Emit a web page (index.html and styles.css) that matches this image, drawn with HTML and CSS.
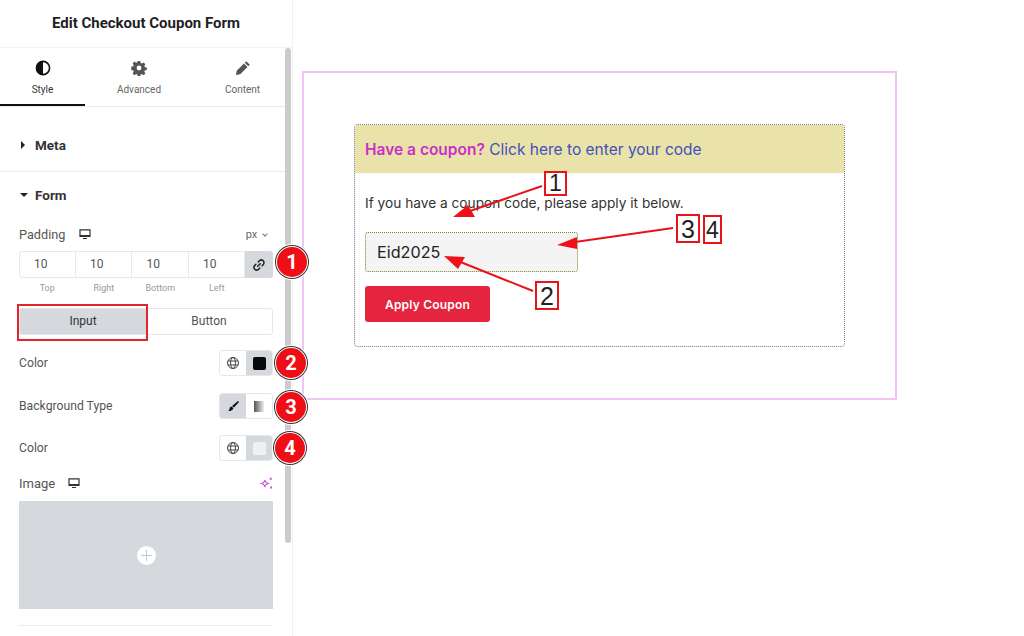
FILE: index.html
```html
<!DOCTYPE html>
<html lang="en">
<head>
    <meta charset="UTF-8">
    <title>Edit Checkout Coupon Form</title>
    <link rel="stylesheet" href="styles.css">
</head>
<body>
    <aside class="panel">
        <header class="panel-title">Edit Checkout Coupon Form</header>
        <nav class="tabs">
            <div class="tab tab-active">
                <svg class="tab-icon" viewBox="0 0 16 16"><circle cx="8" cy="8" r="6.6" fill="none" stroke="#111" stroke-width="1.6"/><path d="M8 1.4a6.6 6.6 0 0 0 0 13.2z" fill="#111"/></svg>
                <span>Style</span>
            </div>
            <div class="tab tab-mid">
                <svg class="tab-icon" viewBox="0 0 16 16"><path fill="#555" fill-rule="evenodd" d="M6.7 1h2.6l.4 2 1.2.5 1.7-1.100 1.800 1.800-1.100 1.700.5 1.200 2 .4v2.600l-2 .4-.5 1.200 1.100 1.700-1.800 1.800-1.700-1.100-1.200.5-.4 2H6.700l-.4-2-1.200-.5-1.700 1.100-1.800-1.800 1.100-1.700-.5-1.200-2-.4V6.700l2-.4.5-1.200-1.100-1.700 1.800-1.800 1.700 1.100 1.200-.5zM8 5.600a2.400 2.400 0 1 0 0 4.800 2.400 2.400 0 0 0 0-4.800z"/></svg>
                <span>Advanced</span>
            </div>
            <div class="tab tab-last">
                <svg class="tab-icon" viewBox="0 0 16 16"><path fill="#555" d="M11.300 1.200l3.500 3.500-1.500 1.500-3.500-3.500zM9 3.500L12.500 7l-7.300 7.300-4.200.7.700-4.200z"/></svg>
                <span>Content</span>
            </div>
        </nav>
        <section class="group group-meta">
            <span class="caret caret-right"></span>
            <h3>Meta</h3>
        </section>
        <section class="form-section">
            <div class="group-head">
                <span class="caret caret-down"></span>
                <h3>Form</h3>
            </div>
            <div class="label-row padding-label">
                <span>Padding</span>
                <svg class="device" viewBox="0 0 12 12"><path fill="none" stroke="#333" stroke-width="1.200" d="M1 1.800h10v6.700H1z"/><path fill="#333" d="M1 7h10v1.500H1zM4 10h4v1H4z"/></svg>
                <span class="unit">px <i class="chev"></i></span>
            </div>
            <div class="dims">
                <div class="dim"><div class="dim-box">10</div><small>Top</small></div>
                <div class="dim"><div class="dim-box">10</div><small>Right</small></div>
                <div class="dim"><div class="dim-box">10</div><small>Bottom</small></div>
                <div class="dim"><div class="dim-box">10</div><small>Left</small></div>
                <div class="link-btn">
                    <svg viewBox="0 0 14 14"><path fill="none" stroke="#222" stroke-width="1.500" stroke-linecap="round" d="M5.700 8.300l2.600-2.600M6.300 3.900l1.100-1.100a2.500 2.500 0 0 1 3.800 3.800l-1.100 1.100M7.700 10.100l-1.100 1.100a2.500 2.500 0 0 1-3.800-3.800l1.100-1.100"/></svg>
                </div>
            </div>
            <div class="switch">
                <div class="switch-item switch-on">Input</div>
                <div class="switch-item">Button</div>
            </div>
            <div class="ctl-row ctl-color">
                <span>Color</span>
                <div class="ctl">
                    <div class="ctl-cell">
                        <svg class="globe" viewBox="0 0 14 14"><g fill="none" stroke="#444" stroke-width="1"><circle cx="7" cy="7" r="5.500"/><ellipse cx="7" cy="7" rx="2.400" ry="5.500"/><path d="M2 5h10M2 9h10"/></g></svg>
                    </div>
                    <div class="ctl-cell cell-on"><span class="swatch swatch-black"></span></div>
                </div>
            </div>
            <div class="ctl-row ctl-bg">
                <span>Background Type</span>
                <div class="ctl">
                    <div class="ctl-cell cell-on">
                        <svg class="globe" viewBox="0 0 14 14"><path fill="#111" d="M12 2l1 1-5 5.600-2-1.700zM5.400 7.400l2 1.700c-.3 2.100-2.500 3.200-5.400 2.700 1.200-.7 1.400-1.300 1.600-2.300.2-1.100.8-1.900 1.800-2.100z"/></svg>
                    </div>
                    <div class="ctl-cell"><span class="gradient"></span></div>
                </div>
            </div>
            <div class="ctl-row ctl-color2">
                <span>Color</span>
                <div class="ctl">
                    <div class="ctl-cell">
                        <svg class="globe" viewBox="0 0 14 14"><g fill="none" stroke="#444" stroke-width="1"><circle cx="7" cy="7" r="5.500"/><ellipse cx="7" cy="7" rx="2.400" ry="5.500"/><path d="M2 5h10M2 9h10"/></g></svg>
                    </div>
                    <div class="ctl-cell cell-on"><span class="swatch swatch-light"></span></div>
                </div>
            </div>
            <div class="label-row image-label">
                <span>Image</span>
                <svg class="device" viewBox="0 0 12 12"><path fill="none" stroke="#333" stroke-width="1.200" d="M1 1.800h10v6.700H1z"/><path fill="#333" d="M1 7h10v1.500H1zM4 10h4v1H4z"/></svg>
                <svg class="sparkle" viewBox="0 0 12 12"><path fill="none" stroke="#c44fd8" stroke-width="1" d="M4.500 2.800c.4 2 1.100 2.700 3 3.200-1.900.5-2.600 1.200-3 3.200-.4-2-1.100-2.700-3-3.200 1.900-.5 2.600-1.200 3-3.200z"/><path fill="#c44fd8" d="M9 .8h1.800v1.800H9zM9.400 8.800h1.700v1.700H9.400z"/></svg>
            </div>
            <div class="image-box">
                <span class="plus"></span>
            </div>
            <hr class="rule">
        </section>
        <div class="scroll-thumb"></div>
    </aside>

    <main class="canvas">
        <div class="frame">
            <div class="coupon">
                <div class="coupon-head"><b>Have a coupon?</b> <a href="#">Click here to enter your code</a></div>
                <div class="coupon-body">
                    <p>If you have a coupon code, please apply it below.</p>
                    <div class="coupon-input">Eid2025</div>
                    <button class="coupon-btn">Apply Coupon</button>
                </div>
            </div>
        </div>
    </main>

    <!-- red annotations drawn on top of the screenshot -->
    <svg class="arrows" viewBox="0 0 1024 636">
        <g stroke="#e8141c" stroke-width="2" fill="#f0101a">
            <path d="M542 186L470 211"/>
            <path stroke="none" d="M453 217L468 205L475 217z"/>
            <path d="M673 228L575 242"/>
            <path stroke="none" d="M557 245L577 237L577 249z"/>
            <path d="M533 291L458 261"/>
            <path stroke="none" d="M444 256L465 257L458 269z"/>
        </g>
    </svg>
    <div class="num num-1">1</div>
    <div class="num num-2">2</div>
    <div class="num num-3">3</div>
    <div class="num num-4">4</div>
    <div class="red-box"></div>
    <div class="badge badge-1">1</div>
    <div class="badge badge-2">2</div>
    <div class="badge badge-3">3</div>
    <div class="badge badge-4">4</div>
</body>
</html>
```

FILE: styles.css
```css
html, body {
    height: 100%;
}
body {
    display: flex;
    margin: 0;
    overflow: hidden;
    background-color: #fff;
    color: #333;
    font-family: Roboto, "Liberation Sans", sans-serif;
    font-size: 12px;
}

/* left panel */
.panel {
    position: relative;
    flex: 0 0 293px;
    height: 636px;
    box-sizing: border-box;
    border-right: 1px solid #f1f1f3;
    overflow: hidden;
}
.panel-title {
    height: 47px;
    line-height: 47px;
    text-align: center;
    font-size: 15px;
    font-weight: 700;
    color: #1f1f1f;
    border-bottom: 1px solid #f4f4f5;
}
.tabs {
    display: flex;
    height: 58px;
    border-bottom: 1px solid #e9eaec;
}
.tab {
    flex: 0 0 85px;
    display: flex;
    flex-direction: column;
    align-items: center;
    padding-top: 12px;
    box-sizing: border-box;
    height: 58px;
    font-size: 10px;
    color: #666;
}
.tab-mid {
    flex-basis: 108px;
}
.tab-last {
    flex-basis: 99px;
}
.tab-active {
    color: #333;
    border-bottom: 2px solid #111;
}
.tab-icon {
    width: 16px;
    height: 16px;
    margin-bottom: 8px;
}
.group {
    display: flex;
    align-items: center;
    box-sizing: border-box;
    height: 65px;
    padding: 12px 0 0 21px;
    border-bottom: 1px solid #e9eaec;
}
.group h3, .group-head h3 {
    margin: 0 0 0 10px;
    font-size: 13.500px;
    font-weight: 700;
    color: #333;
}
.caret {
    width: 0;
    height: 0;
    border-style: solid;
}
.caret-right {
    border-width: 4px 0 4px 4px;
    border-color: transparent transparent transparent #222;
}
.caret-down {
    border-width: 4px 4.500px 0;
    border-color: #222 transparent transparent;
    margin-left: -1px;
}
.form-section {
    padding: 0 19px;
}
.group-head {
    display: flex;
    align-items: center;
    height: 16px;
    margin: 15px 0 0 2px;
}
.group-head h3 {
    margin-left: 7px;
}
.label-row {
    display: flex;
    align-items: center;
    height: 16px;
    font-size: 12.700px;
    color: #555;
}
.padding-label {
    margin-top: 23px;
}
.device {
    width: 12px;
    height: 12px;
    margin-left: 14px;
}
.unit {
    margin-left: auto;
    margin-right: 6px;
    font-size: 11px;
    color: #666;
}
.chev {
    display: inline-block;
    width: 3px;
    height: 3px;
    margin: 0 0 2px 3px;
    border-right: 1px solid #777;
    border-bottom: 1px solid #777;
    transform: rotate(45deg);
}
.dims {
    display: flex;
    margin-top: 9px;
}
.dim {
    flex: 0 0 56.500px;
    text-align: center;
}
.dim small {
    display: block;
    margin-top: 5px;
    font-size: 9px;
    color: #999;
}
.dim-box {
    box-sizing: border-box;
    height: 27px;
    line-height: 25px;
    padding-right: 13px;
    border: 1px solid #e6e8ea;
    border-left-width: 0;
    font-size: 12px;
    color: #555;
}
.dim:first-child .dim-box {
    border-left-width: 1px;
    border-radius: 3px 0 0 3px;
}
.link-btn {
    display: flex;
    align-items: center;
    justify-content: center;
    flex: 1;
    height: 27px;
    background-color: #d5d8dc;
    border-radius: 0 3px 3px 0;
}
.link-btn svg {
    width: 14px;
    height: 14px;
}
.switch {
    display: flex;
    height: 27px;
    margin-top: 15px;
    border: 1px solid #e6e8ea;
    border-radius: 3px;
    box-sizing: border-box;
}
.switch-item {
    flex: 1;
    line-height: 25px;
    text-align: center;
    color: #555;
}
.switch-on {
    background-color: #d5d8dc;
    color: #333;
}
.ctl-row {
    display: flex;
    align-items: center;
    justify-content: space-between;
    height: 26px;
    font-size: 12.200px;
    color: #555;
}
.ctl-color {
    margin-top: 15px;
}
.ctl-bg {
    margin-top: 17px;
}
.ctl-color2 {
    margin-top: 16px;
}
.ctl {
    display: flex;
    width: 54px;
    height: 26px;
    box-sizing: border-box;
    border: 1px solid #e6e8ea;
    border-radius: 3px;
    overflow: hidden;
}
.ctl-cell {
    flex: 1;
    display: flex;
    align-items: center;
    justify-content: center;
}
.cell-on {
    background-color: #d5d8dc;
}
.globe {
    width: 14px;
    height: 14px;
}
.swatch {
    width: 13px;
    height: 13px;
    border-radius: 2px;
}
.swatch-black {
    background-color: #0a0a0a;
}
.swatch-light {
    background-color: #eef0f2;
}
.gradient {
    width: 10px;
    height: 11px;
    background-image: linear-gradient(to right, #555, #eee);
}
.image-label {
    margin-top: 14px;
    font-size: 13px;
}
.image-label .device {
    margin-left: 13px;
}
.sparkle {
    width: 13px;
    height: 13px;
    margin-left: auto;
}
.image-box {
    display: flex;
    align-items: center;
    justify-content: center;
    height: 108px;
    margin-top: 10px;
    background-color: #d5d8dc;
}
.plus {
    position: relative;
    width: 19px;
    height: 19px;
    border-radius: 50%;
    background-color: #fff;
}
.plus::before, .plus::after {
    content: "";
    position: absolute;
    background-color: #c4c8cc;
}
.plus::before {
    left: 4px;
    right: 4px;
    top: 9px;
    height: 1px;
}
.plus::after {
    top: 4px;
    bottom: 4px;
    left: 9px;
    width: 1px;
}
.rule {
    margin: 16px 0 0;
    border: 0;
    border-top: 1px solid #e9eaec;
}
.scroll-thumb {
    position: absolute;
    top: 48px;
    right: 1px;
    width: 6px;
    height: 495px;
    border-radius: 3px;
    background-color: #cbcbcb;
}

/* canvas with the widget */
.canvas {
    flex: 1;
    padding: 71px 0 0 9px;
}
.frame {
    box-sizing: border-box;
    width: 595px;
    height: 329px;
    padding: 51px 50px 0;
    border: 2px solid #f0c4f5;
}
.coupon {
    box-sizing: border-box;
    width: 491px;
    height: 223px;
    border: 1px dotted #777;
    border-radius: 4px;
    overflow: hidden;
    font-family: Inter, "Liberation Sans", sans-serif;
}
.coupon-head {
    height: 48px;
    padding-left: 10px;
    line-height: 50px;
    font-size: 15.500px;
    background-color: #e9e3a9;
    color: #4450bd;
}
.coupon-head b {
    font-weight: 600;
    color: #cc2dcb;
}
.coupon-head a {
    color: #4450bd;
    text-decoration: none;
}
.coupon-body {
    padding: 21px 10px 0;
}
.coupon-body p {
    margin: 0;
    font-size: 13.700px;
    line-height: 18px;
    color: #333;
}
.coupon-input {
    box-sizing: border-box;
    width: 213px;
    height: 40px;
    margin-top: 20px;
    padding-left: 11px;
    line-height: 38px;
    font-size: 16.200px;
    border: 1px dotted #76881c;
    border-radius: 3px;
    background-color: #f4f4f4;
    color: #222;
}
.coupon-btn {
    display: block;
    width: 125px;
    height: 36px;
    margin-top: 14px;
    border: none;
    border-radius: 3px;
    background-color: #e5243f;
    color: #fff;
    font-family: inherit;
    font-size: 12px;
    font-weight: 600;
    letter-spacing: .2px;
}

/* annotations */
.arrows {
    position: absolute;
    left: 0;
    top: 0;
    width: 1024px;
    height: 636px;
}
.num {
    position: absolute;
    box-sizing: border-box;
    border: 2px solid #e8141c;
    background-color: #fff;
    color: #222;
    font-family: "Liberation Sans", sans-serif;
    font-size: 25px;
    line-height: 23px;
    text-align: center;
}
.num-1 {
    left: 544px;
    top: 171px;
    width: 23px;
    height: 25px;
    font-size: 23px;
    line-height: 21px;
}
.num-2 {
    left: 535px;
    top: 281px;
    width: 24px;
    height: 29px;
    line-height: 27px;
}
.num-3 {
    left: 676px;
    top: 214px;
    width: 24px;
    height: 29px;
    line-height: 27px;
}
.num-4 {
    left: 703px;
    top: 215px;
    width: 19px;
    height: 29px;
    line-height: 27px;
    font-size: 23px;
}
.red-box {
    position: absolute;
    left: 17px;
    top: 304px;
    width: 131px;
    height: 37px;
    box-sizing: border-box;
    border: 2px solid #e3242b;
}
.badge {
    position: absolute;
    width: 30px;
    height: 30px;
    border-radius: 50%;
    background-color: #ef0d16;
    box-shadow: 0 0 0 1px #fff, 0 0 0 2px #333, 0 0 0 3px #fff;
    color: #fff;
    font-size: 20px;
    font-weight: 700;
    line-height: 30px;
    text-align: center;
}
.badge-1 {
    left: 277px;
    top: 247px;
}
.badge-2 {
    left: 276px;
    top: 348px;
}
.badge-3 {
    left: 276px;
    top: 392px;
}
.badge-4 {
    left: 275px;
    top: 433px;
}
```
